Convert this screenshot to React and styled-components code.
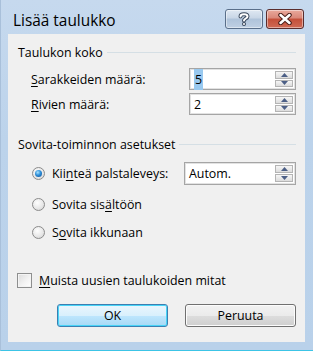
import styled, { createGlobalStyle } from "styled-components";

const GlobalStyle = createGlobalStyle`
	html, body {
		margin: 0;
		padding: 0;
		background: #ffffff;
	}
	body {
		font-family: "Open Sans", "Noto Sans", sans-serif;
		font-size: 12.4px;
		color: #000;
	}
`;

const Window = styled.div`
	width: 313px;
	height: 351px;
	box-sizing: border-box;
	display: flex;
	flex-direction: column;
	background: linear-gradient(180deg, #c6d9ee 0%, #bcd3eb 40%, #b9d1ea 100%);
	border-bottom: 1px solid #3cc4e6;
	border-left: 1px solid #a9c0da;
`;

const TitleBar = styled.div`
	height: 34px;
	display: flex;
	align-items: flex-start;
	padding: 0 9px 0 12px;
	box-sizing: border-box;
`;

const Title = styled.div`
	flex: 1;
	font-size: 15.4px;
	line-height: 16px;
	margin-top: 13px;
	color: #000;
`;

const CaptionButton = styled.div`
	margin-top: 9px;
	width: 38px;
	height: 20px;
	box-sizing: border-box;
	border: 1px solid ${(p) => (p.$close ? "#5a2d2d" : "#5a6f8a")};
	border-radius: 3px;
	display: flex;
	align-items: center;
	justify-content: center;
	margin-left: ${(p) => (p.$close ? "3px" : "0")};
	background: ${(p) =>
		p.$close
			? "linear-gradient(180deg, #e9a99c 0%, #d98778 45%, #c44f39 50%, #cf6a55 100%)"
			: "linear-gradient(180deg, #dfe8f2 0%, #c8d6e6 45%, #afc3da 50%, #bfd0e3 100%)"};
	box-shadow: inset 0 0 0 1px rgba(255, 255, 255, 0.45);
`;

const Client = styled.div`
	margin: 0 8px 0 7px;
	height: 308px;
	background: #f0f0f0;
	display: flex;
	flex-direction: column;
	padding: 0 9px 0 9px;
	box-sizing: border-box;
`;

const GroupHeader = styled.div`
	display: flex;
	align-items: center;
	height: 14px;
	margin-top: ${(p) => p.$top}px;
	padding-left: 1px;
	gap: 4px;

	&::after {
		content: "";
		flex: 1;
		height: 1px;
		background: #d5dfe5;
	}
`;

const FieldRow = styled.div`
	display: flex;
	align-items: center;
	height: ${(p) => p.$h || 22}px;
	margin-top: ${(p) => p.$top}px;
`;

const FieldLabel = styled.div`
	padding-left: 14px;
	width: 178px;
	box-sizing: border-box;
`;

const SpinBox = styled.div`
	width: ${(p) => p.$w || 111}px;
	height: ${(p) => p.$h || 22}px;
	box-sizing: border-box;
	border: 1px solid #a5a5a5;
	box-shadow: inset 0 0 0 1px #e2e2e2;
	background: #fff;
	display: flex;
	align-items: center;
	padding: 2px;
`;

const SpinValue = styled.div`
	flex: 1;
	display: flex;
	align-items: center;
	padding-left: 2px;
`;

const Selected = styled.span`
	background: #99c9ef;
	padding: 2px 1px;
`;

const SpinButtons = styled.div`
	display: flex;
	flex-direction: column;
	gap: 1px;
	height: 100%;
`;

const SpinButton = styled.div`
	flex: 1;
	width: 18px;
	box-sizing: border-box;
	border: 1px solid #b4b4b4;
	background: linear-gradient(180deg, #f6f6f6 0%, #e9e9e9 50%, #dcdcdc 100%);
	display: flex;
	align-items: center;
	justify-content: center;
`;

const Radio = styled.div`
	width: 13px;
	height: 13px;
	border-radius: 50%;
	box-sizing: border-box;
	border: 1px solid #8b8b8b;
	background: radial-gradient(circle at 40% 35%, #fefefe 0%, #e8e8e8 55%, #cfcfcf 100%);
	display: flex;
	align-items: center;
	justify-content: center;
	margin-left: 15px;
	flex-shrink: 0;

	&::after {
		content: "";
		display: ${(p) => (p.$checked ? "block" : "none")};
		width: 7px;
		height: 7px;
		border-radius: 50%;
		background: radial-gradient(circle at 40% 35%, #a9e4ff 0%, #2d8ed8 45%, #0b4a91 100%);
	}
`;

const OptionLabel = styled.div`
	margin-left: 7px;
	width: ${(p) => (p.$w ? `${p.$w}px` : "auto")};
`;

const Checkbox = styled.div`
	width: 15px;
	height: 15px;
	box-sizing: border-box;
	border: 1px solid #8e8f8f;
	background: linear-gradient(135deg, #dcdcdc 0%, #f4f4f4 60%, #ffffff 100%);
	box-shadow: inset 0 0 0 1px #f4f4f4;
	flex-shrink: 0;
`;

const ButtonRow = styled.div`
	display: flex;
	gap: 17px;
	margin-top: 16px;
	padding-left: 40px;
`;

const Button = styled.div`
	width: 111px;
	height: 23px;
	box-sizing: border-box;
	border-radius: 3px;
	border: 1px solid ${(p) => (p.$default ? "#3c7fb1" : "#707070")};
	background: ${(p) =>
		p.$default
			? "linear-gradient(180deg, #eaf6fd 0%, #d9f0fc 50%, #bee6fd 51%, #a7d9f5 100%)"
			: "linear-gradient(180deg, #f2f2f2 0%, #ebebeb 50%, #dddddd 51%, #cfcfcf 100%)"};
	box-shadow: inset 0 0 0 1px ${(p) => (p.$default ? "#48d4f7" : "#fcfcfc")};
	display: flex;
	align-items: center;
	justify-content: center;
`;

const U = styled.span`
	text-decoration: underline;
	text-underline-offset: 2px;
`;

function Arrow({ up }) {
	return (
		<svg width="7" height="4" viewBox="0 0 7 4">
			<path d={up ? "M0 4 L3.5 0 L7 4 Z" : "M0 0 L3.5 4 L7 0 Z"} fill="#4c5f86" />
		</svg>
	);
}

function Spin({ children, w, h }) {
	return (
		<SpinBox $w={w} $h={h}>
			<SpinValue>{children}</SpinValue>
			<SpinButtons>
				<SpinButton>
					<Arrow up />
				</SpinButton>
				<SpinButton>
					<Arrow />
				</SpinButton>
			</SpinButtons>
		</SpinBox>
	);
}

function HelpGlyph() {
	return (
		<svg width="12" height="14" viewBox="0 0 12 14">
			<path
				d="M2.5 4.5 C2.5 1.5 9.5 1.5 9.5 4.5 C9.5 6.5 6 6.5 6 8.5"
				stroke="#3b4a5e"
				strokeWidth="4"
				fill="none"
				strokeLinecap="round"
			/>
			<path
				d="M2.5 4.5 C2.5 1.5 9.5 1.5 9.5 4.5 C9.5 6.5 6 6.5 6 8.5"
				stroke="#fff"
				strokeWidth="2"
				fill="none"
				strokeLinecap="round"
			/>
			<circle cx="6" cy="12" r="2" fill="#3b4a5e" />
			<circle cx="6" cy="12" r="1" fill="#fff" />
		</svg>
	);
}

function CloseGlyph() {
	return (
		<svg width="14" height="12" viewBox="0 0 14 12">
			<path d="M2.5 2 L11.5 10 M11.5 2 L2.5 10" stroke="#4a1f1a" strokeWidth="4.5" strokeLinecap="round" />
			<path d="M2.5 2 L11.5 10 M11.5 2 L2.5 10" stroke="#fff" strokeWidth="2.5" strokeLinecap="round" />
		</svg>
	);
}

export default function App() {
	return (
		<>
			<GlobalStyle />
			<Window>
				<TitleBar>
					<Title>Lisää taulukko</Title>
					<CaptionButton>
						<HelpGlyph />
					</CaptionButton>
					<CaptionButton $close>
						<CloseGlyph />
					</CaptionButton>
				</TitleBar>
				<Client>
					<GroupHeader $top={11}>Taulukon koko</GroupHeader>
					<FieldRow $top={9}>
						<FieldLabel>
							<U>S</U>arakkeiden määrä:
						</FieldLabel>
						<Spin>
							<Selected>5</Selected>
						</Spin>
					</FieldRow>
					<FieldRow $top={3}>
						<FieldLabel>
							<U>R</U>ivien määrä:
						</FieldLabel>
						<Spin>2</Spin>
					</FieldRow>
					<GroupHeader $top={22}>Sovita-toiminnon asetukset</GroupHeader>
					<FieldRow $top={11} $h={23}>
						<Radio $checked />
						<OptionLabel $w={132}>
							Kii<U>n</U>teä palstaleveys:
						</OptionLabel>
						<Spin w={112} h={23}>
							Autom.
						</Spin>
					</FieldRow>
					<FieldRow $top={9} $h={20}>
						<Radio />
						<OptionLabel>
							Sovita sis<U>ä</U>ltöön
						</OptionLabel>
					</FieldRow>
					<FieldRow $top={8} $h={20}>
						<Radio />
						<OptionLabel>
							S<U>o</U>vita ikkunaan
						</OptionLabel>
					</FieldRow>
					<FieldRow $top={30} $h={16}>
						<Checkbox />
						<OptionLabel>
							<U>M</U>uista uusien taulukoiden mitat
						</OptionLabel>
					</FieldRow>
					<ButtonRow>
						<Button $default>OK</Button>
						<Button>Peruuta</Button>
					</ButtonRow>
				</Client>
			</Window>
		</>
	);
}
